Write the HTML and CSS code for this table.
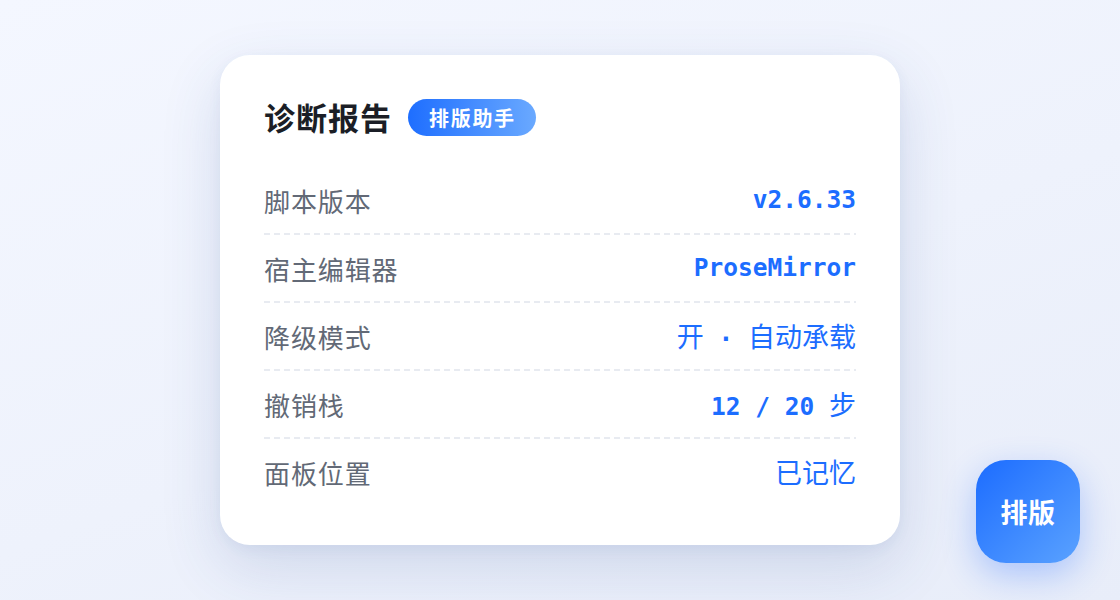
FILE: index.html
```html
<!DOCTYPE html>
<html lang="zh-CN">
<head>
<meta charset="utf-8">
<title>诊断报告</title>
<link rel="stylesheet" href="styles.css">
</head>
<body>
<main class="card">
  <header class="card-head">
    <h1 class="title">诊断报告</h1>
    <span class="badge">排版助手</span>
  </header>
  <ul class="rows">
    <li class="row"><span class="label">脚本版本</span><span class="value">v2.6.33</span></li>
    <li class="row"><span class="label">宿主编辑器</span><span class="value">ProseMirror</span></li>
    <li class="row"><span class="label">降级模式</span><span class="value"><span class="cjk">开</span> · <span class="cjk">自动承载</span></span></li>
    <li class="row"><span class="label">撤销栈</span><span class="value">12 / 20 <span class="cjk">步</span></span></li>
    <li class="row"><span class="label">面板位置</span><span class="value"><span class="cjk">已记忆</span></span></li>
  </ul>
</main>
<button class="fab">排版</button>
</body>
</html>
```
FILE: styles.css
```css
* { box-sizing: border-box; }
html, body { margin: 0; padding: 0; }
body {
  width: 1120px;
  height: 600px;
  overflow: hidden;
  display: flex;
  align-items: center;
  justify-content: center;
  font-family: "Noto Sans CJK SC", "Noto Sans", sans-serif;
  background: linear-gradient(160deg, #f4f7ff 0%, #eef2fc 55%, #e8edf9 100%);
  position: relative;
}
.card {
  width: 680px;
  height: 490px;
  background: #ffffff;
  border-radius: 30px;
  padding: 42px 44px 38px;
  box-shadow: 0 22px 60px rgba(50, 80, 150, 0.16), 0 4px 14px rgba(50, 80, 150, 0.06);
}
.card-head {
  display: flex;
  align-items: center;
  gap: 16px;
  height: 40px;
  margin-bottom: 30px;
}
.title {
  margin: 0;
  font-size: 31px;
  letter-spacing: 1px;
  font-weight: 700;
  color: #1b1e26;
  line-height: 40px;
}
.badge {
  display: inline-flex;
  align-items: center;
  height: 37px;
  padding: 0 20px 0 21px;
  border-radius: 19px;
  background: linear-gradient(90deg, #1e6eff 0%, #6aa9ff 100%);
  color: #fff;
  font-weight: 700;
  font-size: 20px;
  letter-spacing: 1.7px;
}
.rows { list-style: none; margin: 0; padding: 0; }
.row {
  height: 68px;
  padding-bottom: 2px;
  display: flex;
  align-items: center;
  justify-content: space-between;
  background-image: repeating-linear-gradient(90deg, #e8ebf1 0 6px, transparent 6px 10px);
  background-size: 100% 2px;
  background-repeat: no-repeat;
  background-position: left bottom;
}
.row:last-child { background-image: none; }
.label {
  font-size: 26px;
  letter-spacing: 0.9px;
  color: #626976;
}
.value {
  font-family: "DejaVu Sans Mono", "Noto Sans CJK SC", monospace;
  font-weight: 700;
  font-size: 24.5px;
  color: #1c6dff;
  white-space: pre;
  margin-top: -2px;
}
.cjk {
  font-family: "Noto Sans CJK SC", sans-serif;
  font-weight: 400;
  font-size: 27px;
}
.fab {
  position: absolute;
  left: 976px;
  top: 460px;
  width: 104px;
  height: 103px;
  border: none;
  border-radius: 30px;
  background: linear-gradient(135deg, #1c6cff 0%, #5aa2ff 100%);
  color: #fff;
  font-family: "Noto Sans CJK SC", sans-serif;
  font-weight: 700;
  font-size: 27px;
  letter-spacing: 0.5px;
  box-shadow: 0 12px 34px rgba(40, 110, 255, 0.32);
}
```
